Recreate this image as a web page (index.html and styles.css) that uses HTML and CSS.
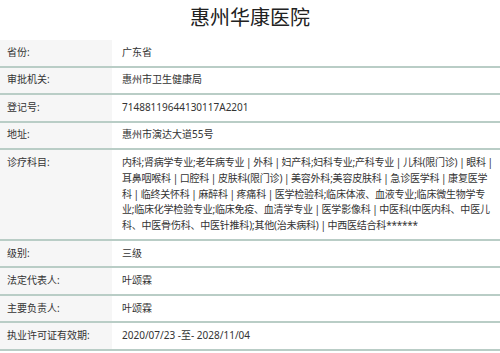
FILE: index.html
```html
<!DOCTYPE html>
<html lang="zh-CN">
<head>
<meta charset="utf-8">
<title>惠州华康医院</title>
<link rel="stylesheet" href="styles.css">
</head>
<body>
<h1 class="title">惠州华康医院</h1>
<div class="table">
  <div class="row"><div class="label">省份:</div><div class="value">广东省</div></div>
  <div class="row"><div class="label">审批机关:</div><div class="value">惠州市卫生健康局</div></div>
  <div class="row"><div class="label">登记号:</div><div class="value">71488119644130117A2201</div></div>
  <div class="row"><div class="label">地址:</div><div class="value">惠州市演达大道55号</div></div>
  <div class="row"><div class="label">诊疗科目:</div><div class="value multi">内科;肾病学专业;老年病专业 | 外科 | 妇产科;妇科专业;产科专业 | 儿科(限门诊) | 眼科 |<br>耳鼻咽喉科 | 口腔科 | 皮肤科(限门诊) | 美容外科;美容皮肤科 | 急诊医学科 | 康复医学<br>科 | 临终关怀科 | 麻醉科 | 疼痛科 | 医学检验科;临床体液、血液专业;临床微生物学专<br>业;临床化学检验专业;临床免疫、血清学专业 | 医学影像科 | 中医科(中医内科、中医儿<br>科、中医骨伤科、中医针推科);其他(治未病科) | 中西医结合科******</div></div>
  <div class="row"><div class="label">级别:</div><div class="value">三级</div></div>
  <div class="row"><div class="label">法定代表人:</div><div class="value">叶颂霖</div></div>
  <div class="row"><div class="label">主要负责人:</div><div class="value">叶颂霖</div></div>
  <div class="row"><div class="label">执业许可证有效期:</div><div class="value">2020/07/23 -至- 2028/11/04</div></div>
</div>
</body>
</html>
```

FILE: styles.css
```css
html, body {
  margin: 0;
  padding: 0;
  background: #ffffff;
}
body {
  font-family: "Noto Sans", "Noto Sans CJK SC", sans-serif;
  color: #333333;
}
.title {
  margin: 0;
  height: 40px;
  box-sizing: border-box;
  padding-top: 7px;
  font-size: 20px;
  line-height: 22px;
  font-weight: normal;
  text-align: center;
  color: #222222;
}
.table {
  display: flex;
  flex-direction: column;
}
.row {
  display: grid;
  grid-template-columns: 112px 1fr;
  border-bottom: 2px solid #b9cdc6;
  font-size: 10px;
  line-height: 15.75px;
}
.label {
  background: #f6f6f6;
  padding: 4.9px 4px 4.9px 7px;
  white-space: nowrap;
}
.value {
  padding: 4.9px 0 4.9px 10px;
  white-space: nowrap;
  min-width: 0;
}
.multi {
  letter-spacing: -0.22px;
  word-spacing: -0.6px;
}
```
